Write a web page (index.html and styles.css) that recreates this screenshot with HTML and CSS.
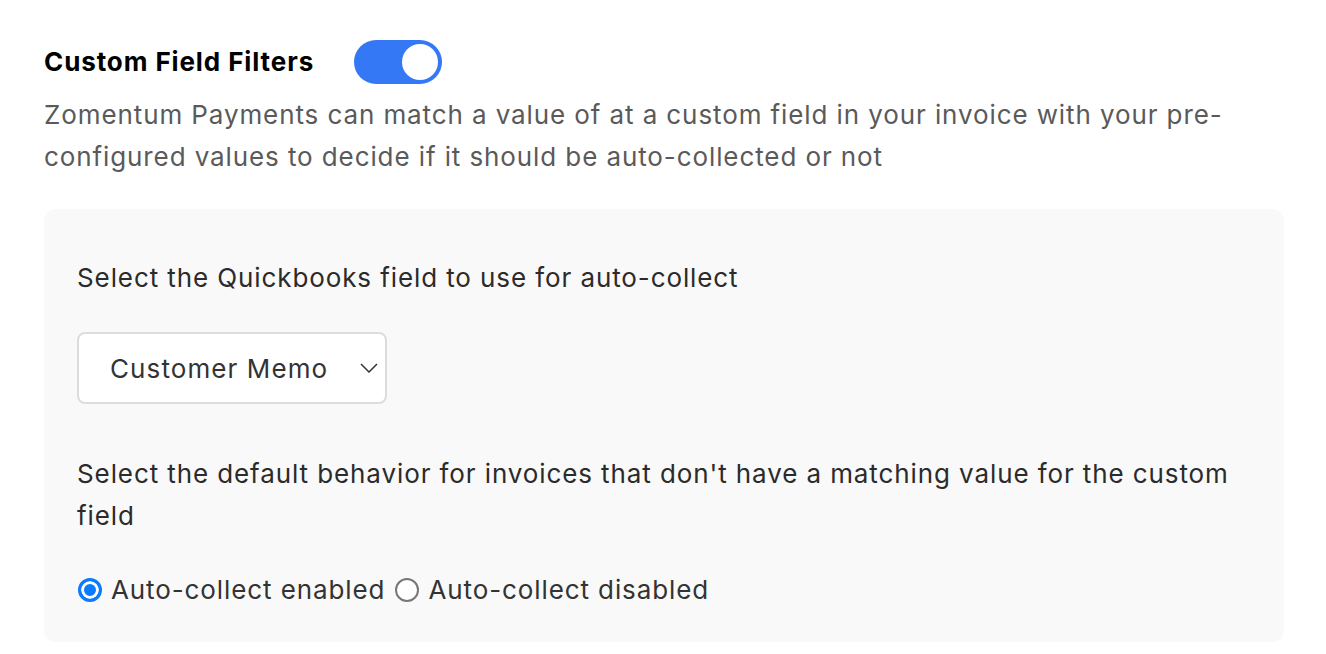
FILE: index.html
```html
<!DOCTYPE html>
<html>
<head>
<meta charset="utf-8">
<link rel="stylesheet" href="styles.css">
</head>
<body>
<div class="page">
  <div class="header">
    <h2 class="title">Custom Field Filters</h2>
    <span class="toggle"><span class="knob"></span></span>
  </div>
  <p class="desc">Zomentum Payments can match a value of at a custom field in your invoice with your pre-configured values to decide if it should be auto-collected or not</p>
  <div class="panel">
    <p class="label">Select the Quickbooks field to use for auto-collect</p>
    <div class="select">
      <span class="select-text">Customer Memo</span>
      <svg class="chev" width="18" height="10" viewBox="0 0 18 10"><path d="M1 1 L9 9 L17 1" fill="none" stroke="#333" stroke-width="1.5"/></svg>
    </div>
    <p class="label second">Select the default behavior for invoices that don't have a matching value for the custom field</p>
    <div class="radios">
      <span class="radio checked"></span><span class="rlabel">Auto-collect enabled</span>
      <span class="radio"></span><span class="rlabel">Auto-collect disabled</span>
    </div>
  </div>
</div>
</body>
</html>
```
FILE: styles.css
```css
* { box-sizing: border-box; }
body {
  margin: 0;
  background: #fff;
  font-family: Inter, "Noto Sans", sans-serif;
  letter-spacing: 0.9px;
}
.page {
  padding: 40px 42px 0 44px;
  width: 1326px;
}
.header {
  display: flex;
  align-items: center;
  height: 44px;
}
.title {
  margin: 0;
  font-size: 26px;
  font-weight: 700;
  color: #000;
  line-height: 42px;
  width: 310px;
}
.toggle {
  width: 88px;
  height: 44px;
  border-radius: 22px;
  background: #3478f6;
  display: flex;
  align-items: center;
  justify-content: flex-end;
  padding-right: 4px;
}
.knob {
  width: 36px;
  height: 36px;
  border-radius: 50%;
  background: #fff;
}
.desc {
  margin: 10px 0 0;
  font-size: 26px;
  line-height: 42px;
  color: #5a5a5a;
}
.panel {
  margin-top: 31px;
  background: #f9f9f9;
  border-radius: 12px;
  padding: 48px 32px 31px 33px;
}
.label {
  margin: 0;
  font-size: 26px;
  line-height: 42px;
  color: #2b2b2b;
}
.label.second {
  margin-top: 49px;
}
.select {
  margin-top: 33px;
  width: 310px;
  height: 72px;
  background: #fff;
  border: 2px solid #dcdcdc;
  border-radius: 8px;
  display: flex;
  align-items: center;
  padding: 0 7px 0 31px;
  justify-content: space-between;
}
.select-text {
  font-size: 26px;
  color: #333;
  letter-spacing: 1.1px;
}
.radios {
  margin-top: 32px;
  display: flex;
  align-items: center;
  height: 42px;
}
.radio {
  width: 24px;
  height: 24px;
  border-radius: 50%;
  border: 2px solid #777;
  background: #fff;
  margin: 0 9px 0 1px;
  flex: none;
}
.radio.checked {
  border: 3px solid #0a7aff;
  background: #0a7aff;
  box-shadow: inset 0 0 0 3px #fff;
}
.rlabel {
  font-size: 26px;
  line-height: 42px;
  color: #333;
  margin-right: 9px;
}
```
